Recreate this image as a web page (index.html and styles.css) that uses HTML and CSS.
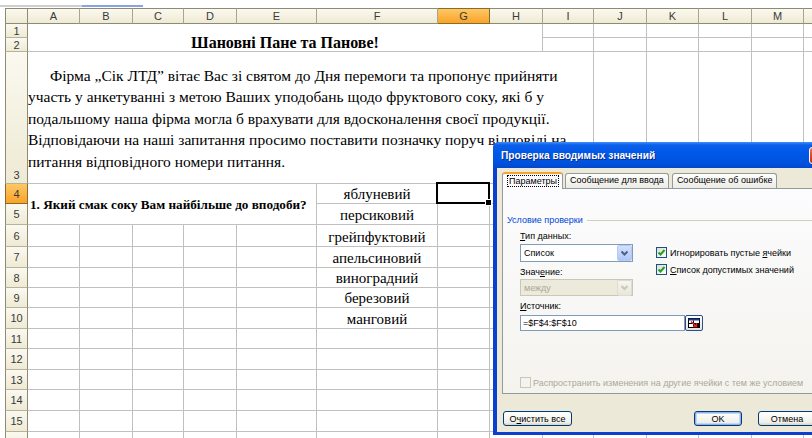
FILE: index.html
```html
<!DOCTYPE html>
<html lang="uk">
<head>
<meta charset="utf-8">
<title>Анкета — Сік ЛТД</title>
<link rel="stylesheet" href="styles.css">
</head>
<body>
<div class="app">
  <div class="toolstrip"><span class="ts-gray"></span><span class="ts-blue"></span></div>

  <div class="sheet">
    <!-- column headers -->
    <div class="hd corner"></div>
    <div class="hd col">A</div><div class="hd col">B</div><div class="hd col">C</div><div class="hd col">D</div>
    <div class="hd col">E</div><div class="hd col">F</div><div class="hd col on">G</div><div class="hd col">H</div>
    <div class="hd col">I</div><div class="hd col">J</div><div class="hd col">K</div><div class="hd col">L</div>
    <div class="hd col">M</div><div class="hd col"></div>

    <!-- rows 1-2 -->
    <div class="hd rh">1</div>
    <div class="c title">Шановні Пане та Панове!</div>
    <div class="c"></div><div class="c"></div><div class="c"></div><div class="c"></div><div class="c"></div><div class="c"></div>
    <div class="hd rh">2</div>
    <div class="c"></div><div class="c"></div><div class="c"></div><div class="c"></div><div class="c"></div><div class="c"></div>

    <!-- row 3 -->
    <div class="hd rh rh-bottom">3</div>
    <div class="c intro"><p>Фірма „Сік ЛТД” вітає Вас зі святом до Дня перемоги та пропонує прийняти<br>участь у анкетуванні з метою Ваших уподобань щодо фруктового соку, які б у<br>подальшому наша фірма могла б врахувати для вдосконалення своєї продукції.<br>Відповідаючи на наші запитання просимо поставити позначку поруч відповіді на<br>питання відповідного номери питання.</p></div>
    <div class="c"></div><div class="c"></div><div class="c"></div><div class="c"></div><div class="c"></div>

    <!-- row 4 -->
    <div class="hd rh on">4</div>
    <div class="c question">1. Який смак соку Вам найбільше до вподоби?</div>
    <div class="c opt">яблуневий</div>
    <div class="c sel"></div>
    <div class="c"></div><div class="c"></div><div class="c"></div><div class="c"></div><div class="c"></div><div class="c"></div><div class="c"></div>

    <!-- row 5 -->
    <div class="hd rh">5</div>
    <div class="c opt">персиковий</div>
    <div class="c"></div><div class="c"></div><div class="c"></div><div class="c"></div><div class="c"></div><div class="c"></div><div class="c"></div><div class="c"></div>

    <!-- rows 6-10 -->
    <div class="hd rh">6</div>
    <div class="c"></div><div class="c"></div><div class="c"></div><div class="c"></div><div class="c"></div>
    <div class="c opt">грейпфуктовий</div>
    <div class="c"></div><div class="c"></div><div class="c"></div><div class="c"></div><div class="c"></div><div class="c"></div><div class="c"></div><div class="c"></div>

    <div class="hd rh">7</div>
    <div class="c"></div><div class="c"></div><div class="c"></div><div class="c"></div><div class="c"></div>
    <div class="c opt">апельсиновий</div>
    <div class="c"></div><div class="c"></div><div class="c"></div><div class="c"></div><div class="c"></div><div class="c"></div><div class="c"></div><div class="c"></div>

    <div class="hd rh">8</div>
    <div class="c"></div><div class="c"></div><div class="c"></div><div class="c"></div><div class="c"></div>
    <div class="c opt">виноградний</div>
    <div class="c"></div><div class="c"></div><div class="c"></div><div class="c"></div><div class="c"></div><div class="c"></div><div class="c"></div><div class="c"></div>

    <div class="hd rh">9</div>
    <div class="c"></div><div class="c"></div><div class="c"></div><div class="c"></div><div class="c"></div>
    <div class="c opt">березовий</div>
    <div class="c"></div><div class="c"></div><div class="c"></div><div class="c"></div><div class="c"></div><div class="c"></div><div class="c"></div><div class="c"></div>

    <div class="hd rh">10</div>
    <div class="c"></div><div class="c"></div><div class="c"></div><div class="c"></div><div class="c"></div>
    <div class="c opt">манговий</div>
    <div class="c"></div><div class="c"></div><div class="c"></div><div class="c"></div><div class="c"></div><div class="c"></div><div class="c"></div><div class="c"></div>

    <!-- rows 11-16 -->
    <div class="hd rh">11</div>
    <div class="c"></div><div class="c"></div><div class="c"></div><div class="c"></div><div class="c"></div><div class="c"></div><div class="c"></div>
    <div class="c"></div><div class="c"></div><div class="c"></div><div class="c"></div><div class="c"></div><div class="c"></div><div class="c"></div>

    <div class="hd rh">12</div>
    <div class="c"></div><div class="c"></div><div class="c"></div><div class="c"></div><div class="c"></div><div class="c"></div><div class="c"></div>
    <div class="c"></div><div class="c"></div><div class="c"></div><div class="c"></div><div class="c"></div><div class="c"></div><div class="c"></div>

    <div class="hd rh">13</div>
    <div class="c"></div><div class="c"></div><div class="c"></div><div class="c"></div><div class="c"></div><div class="c"></div><div class="c"></div>
    <div class="c"></div><div class="c"></div><div class="c"></div><div class="c"></div><div class="c"></div><div class="c"></div><div class="c"></div>

    <div class="hd rh">14</div>
    <div class="c"></div><div class="c"></div><div class="c"></div><div class="c"></div><div class="c"></div><div class="c"></div><div class="c"></div>
    <div class="c"></div><div class="c"></div><div class="c"></div><div class="c"></div><div class="c"></div><div class="c"></div><div class="c"></div>

    <div class="hd rh">15</div>
    <div class="c"></div><div class="c"></div><div class="c"></div><div class="c"></div><div class="c"></div><div class="c"></div><div class="c"></div>
    <div class="c"></div><div class="c"></div><div class="c"></div><div class="c"></div><div class="c"></div><div class="c"></div><div class="c"></div>

    <div class="hd rh">16</div>
    <div class="c"></div><div class="c"></div><div class="c"></div><div class="c"></div><div class="c"></div><div class="c"></div><div class="c"></div>
    <div class="c"></div><div class="c"></div><div class="c"></div><div class="c"></div><div class="c"></div><div class="c"></div><div class="c"></div>
  </div>

  <!-- Data validation dialog -->
  <div class="dialog" role="dialog" aria-label="Проверка вводимых значений">
    <div class="dlg-title">
      <span class="dlg-caption">Проверка вводимых значений</span>
      <span class="dlg-close">
        <svg width="19" height="14" viewBox="0 0 19 14"><path d="M5 3 L12 11 M12 3 L5 11" stroke="#fff" stroke-width="2" fill="none"/></svg>
      </span>
    </div>
    <div class="dlg-client">
      <div class="tabs">
        <span class="tab active"><span class="focus">Параметры</span></span>
        <span class="tab">Сообщение для ввода</span>
        <span class="tab">Сообщение об ошибке</span>
      </div>
      <div class="panel">
        <div class="group-head"><span class="group-label">Условие проверки</span><span class="group-rule"></span></div>
        <div class="cond">
          <div class="cond-left">
            <span class="lbl"><u>Т</u>ип данных:</span>
            <div class="combo">
              <span class="combo-text">Список</span>
              <span class="combo-btn"><svg width="13" height="14" viewBox="0 0 13 14"><path d="M3.5 5.5 L6.5 8.5 L9.5 5.5" stroke="#4d6185" stroke-width="2" fill="none"/></svg></span>
            </div>
            <span class="lbl">Знач<u>е</u>ние:</span>
            <div class="combo disabled">
              <span class="combo-text">между</span>
              <span class="combo-btn"><svg width="13" height="13" viewBox="0 0 13 13"><path d="M3.5 5 L6.5 8 L9.5 5" stroke="#c9c7ba" stroke-width="2" fill="none"/></svg></span>
            </div>
            <span class="lbl"><u>И</u>сточник:</span>
            <div class="src-row">
              <span class="edit">=$F$4:$F$10</span>
              <span class="ref-btn">
                <svg width="14" height="12" viewBox="0 0 14 12">
                  <rect x="1.5" y="1.5" width="11" height="9" fill="#fff" stroke="#000"/>
                  <rect x="1.5" y="1.5" width="11" height="2" fill="#1a3f8c"/>
                  <path d="M1.5 6.5 H12.5 M6.5 3.5 V10.5" stroke="#000"/>
                  <rect x="7.5" y="7" width="5" height="3.5" fill="#000"/>
                  <path d="M4 4.5 L9 9" stroke="#e0201c" stroke-width="1.6"/>
                  <path d="M9.5 6 V9.5 H6" stroke="#e0201c" stroke-width="1.4" fill="none"/>
                </svg>
              </span>
            </div>
          </div>
          <div class="cond-right">
            <div class="check">
              <span class="box"><svg width="9" height="9" viewBox="0 0 9 9"><path d="M1.5 4.5 L3.5 6.5 L7.5 2" stroke="#21a121" stroke-width="2" fill="none"/></svg></span>
              <span>Игнорировать пустые <u>я</u>чейки</span>
            </div>
            <div class="check">
              <span class="box"><svg width="9" height="9" viewBox="0 0 9 9"><path d="M1.5 4.5 L3.5 6.5 L7.5 2" stroke="#21a121" stroke-width="2" fill="none"/></svg></span>
              <span><u>С</u>писок допустимых значений</span>
            </div>
          </div>
        </div>
        <div class="check spread">
          <span class="box off"></span>
          <span>Распространить изменения на другие ячейки с тем же условием</span>
        </div>
      </div>
      <div class="dlg-buttons">
        <span class="btn btn-clear">О<u>ч</u>истить все</span>
        <span class="btn btn-ok">OK</span>
        <span class="btn btn-cancel">Отмена</span>
      </div>
    </div>
  </div>
</div>
</body>
</html>
```

FILE: styles.css
```css
* { box-sizing: border-box; }

html, body {
  margin: 0;
  padding: 0;
  background: #fff;
}

body {
  font-family: "Liberation Serif", "Times New Roman", serif;
  color: #000;
}

.app {
  position: relative;
  width: 812px;
  height: 438px;
  overflow: hidden;
  background: #fff;
}

/* remnant of the toolbar area above the sheet */
.toolstrip {
  height: 8px;
  display: flex;
  align-items: flex-start;
  padding-top: 5px;
}
.ts-gray { width: 82px; height: 2px; background: #cfcfcf; }
.ts-blue { width: 61px; height: 2px; background: #86a3e3; }

/* ---------- worksheet grid ---------- */
.sheet {
  display: grid;
  margin-left: 5px;
  grid-template-columns: 23px 52px 53px 51px 53px 80px 121px 52px 53px 51px 53px 52px 53px 52px 60px;
  grid-template-rows: 16px 14px 14px 132px 20px 21px 22px 21px 20px 20px 21px 20px 21px 20px 21px 21px 21px;
}

.hd {
  background: linear-gradient(#fbf9f0, #eeead4);
  font: 11px/14px "Liberation Sans", Arial, sans-serif;
  color: #3a3a3a;
  display: flex;
  align-items: center;
  justify-content: center;
}

.col {
  border-top: 1px solid #8e8b72;
  border-bottom: 1px solid #8e8b72;
  border-right: 1px solid #aaa68c;
}

.corner {
  border-top: 1px solid #8e8b72;
  border-left: 1px solid #8e8b72;
  border-right: 1px solid #8e8b72;
  border-bottom: 1px solid #8e8b72;
}

.rh {
  border-left: 1px solid #8e8b72;
  border-right: 1px solid #8e8b72;
  border-bottom: 1px solid #b7b39a;
}
.rh-bottom { align-items: flex-end; padding-bottom: 1px; }

.hd.on {
  background: linear-gradient(#fdc866, #f9a328);
  border-color: #8a6a28;
}

.c {
  border-right: 1px solid #c0c0c0;
  border-bottom: 1px solid #c0c0c0;
  min-width: 0;
}

.title {
  grid-column: span 8;
  grid-row: span 2;
  display: flex;
  align-items: flex-end;
  justify-content: center;
  font-weight: bold;
  font-size: 16px;
  line-height: 16px;
}

.intro {
  grid-column: span 9;
  display: flex;
  align-items: center;
  font-size: 15.5px;
  line-height: 21.5px;
  white-space: nowrap;
}
.intro p {
  margin: 0;
  padding-top: 2px;
  text-indent: 22px;
}

.question {
  grid-column: span 5;
  grid-row: span 2;
  display: flex;
  align-items: center;
  padding-left: 2px;
  padding-top: 2px;
  font-weight: bold;
  font-size: 13.2px;
  white-space: nowrap;
}

.opt {
  display: flex;
  align-items: flex-end;
  justify-content: center;
  font-size: 15px;
  line-height: 17px;
  white-space: nowrap;
}

/* active cell frame with its fill handle */
.sel { position: relative; }
.sel::after {
  content: "";
  position: absolute;
  left: -2px;
  top: -2px;
  right: -1px;
  bottom: -1px;
  border: 2px solid #000;
}
.sel::before {
  content: "";
  position: absolute;
  right: -3px;
  bottom: -3px;
  width: 5px;
  height: 5px;
  background: #000;
  border: 1px solid #fff;
  z-index: 1;
}

/* ---------- dialog ---------- */
.dialog {
  position: absolute;
  left: 493px;
  top: 142px;
  width: 340px;
  height: 293px;
  display: flex;
  flex-direction: column;
  background: #0a45dc;
  border-left: 4px solid #0b3fd3;
  border-right: 4px solid #0b3fd3;
  border-bottom: 3px solid #0b3fd3;
  border-radius: 6px 6px 0 0;
  font-family: "Liberation Sans", Arial, sans-serif;
  font-size: 9px;
  color: #000;
  z-index: 5;
}

.dlg-title {
  height: 26px;
  margin: 0 -4px;
  padding: 0 3px 0 8px;
  display: flex;
  align-items: center;
  border-radius: 6px 6px 0 0;
  background: linear-gradient(#3f8ffb 0, #0b5fe9 3px, #0058e8 45%, #0052de 80%, #0148cd 100%);
}

.dlg-caption {
  color: #fff;
  font-weight: bold;
  font-size: 10.2px;
  text-shadow: 1px 1px 0 #0a2a8a;
}

.dlg-close {
  margin-left: auto;
  margin-top: 1px;
  width: 21px;
  height: 17px;
  border: 1px solid #fff;
  border-radius: 3px;
  background: linear-gradient(#e9775a, #d5401a 60%, #c6330e);
  display: flex;
  align-items: center;
  justify-content: center;
}

.dlg-client {
  flex: 1;
  background: #ece9d8;
  padding: 4px 5px 0 5px;
  display: flex;
  flex-direction: column;
}

.tabs {
  display: flex;
  align-items: flex-end;
  height: 16px;
  position: relative;
  z-index: 1;
}

.tab {
  height: 15px;
  padding: 0 4px;
  margin-right: 3px;
  border: 1px solid #919b9c;
  border-bottom: none;
  border-radius: 3px 3px 0 0;
  background: linear-gradient(#fefefe, #ecebe5);
  line-height: 13px;
  white-space: nowrap;
}

.tab.active {
  height: 17px;
  margin-bottom: -1px;
  padding: 0 4px 0 5px;
  margin-right: 2px;
  border-top: 2px solid #f5a431;
  background: #fcfcfe;
  line-height: 14px;
}

.focus {
  outline: 1px dotted #000;
  outline-offset: 0;
  padding: 0 1px;
}

.panel {
  height: 206px;
  margin-right: -10px;
  border: 1px solid #919b9c;
  background: linear-gradient(#fcfcfe, #f4f3ee);
  padding: 24px 0 2px 4px;
  display: flex;
  flex-direction: column;
}

.group-head {
  display: flex;
  align-items: center;
  height: 14px;
}
.group-label { color: #0046d5; }
.group-rule {
  flex: 1;
  height: 1px;
  margin-left: 4px;
  background: #d0d0bf;
}

.cond {
  display: flex;
  margin-left: 13px;
  margin-top: 2px;
}

.cond-left {
  width: 136px;
  display: flex;
  flex-direction: column;
}

.lbl {
  height: 14px;
  line-height: 14px;
}

.combo {
  width: 113px;
  height: 18px;
  margin: 1px 0 3px;
  border: 1px solid #7f9db9;
  background: #fff;
  display: flex;
  align-items: center;
}
.combo-text { flex: 1; padding-left: 3px; }
.combo-btn {
  width: 15px;
  height: 16px;
  border: 1px solid #b6c9f5;
  border-radius: 2px;
  background: linear-gradient(#d2e0fd, #b1c7f6);
  display: flex;
  align-items: center;
  justify-content: center;
}

.combo.disabled {
  height: 17px;
  margin: 0 0 3px;
  border-color: #c9c7ba;
  background: #ebeadb;
  color: #aca899;
}
.combo.disabled .combo-btn {
  border-color: #dedccf;
  background: linear-gradient(#f6f5ef, #e9e7da);
}

.src-row {
  display: flex;
  margin-top: 2px;
  width: 184px;
}

.edit {
  width: 165px;
  height: 16px;
  border: 1px solid #7f9db9;
  background: #fff;
  padding-left: 2px;
  line-height: 14px;
}

.ref-btn {
  width: 18px;
  height: 16px;
  border: 1px solid #2c4d8a;
  border-radius: 2px;
  background: linear-gradient(#ffffff, #e4e3dc);
  display: flex;
  align-items: center;
  justify-content: center;
}

.cond-right {
  padding-top: 15px;
  display: flex;
  flex-direction: column;
}

.check {
  display: flex;
  align-items: center;
  height: 17px;
  white-space: nowrap;
}

.box {
  width: 11px;
  height: 11px;
  margin-right: 3px;
  border: 1px solid #1c5180;
  background: linear-gradient(135deg, #dcdcd6, #fff);
  display: flex;
  align-items: center;
  justify-content: center;
}

.spread {
  margin-top: auto;
  margin-left: 13px;
  color: #aca899;
}
.box.off {
  border-color: #c9c7ba;
  background: #f4f3ee;
  margin-right: 2px;
}

.dlg-buttons {
  display: flex;
  margin-top: 17px;
  padding: 0 8px 0 1px;
}

.btn {
  height: 15px;
  border: 1px solid #003c74;
  border-radius: 3px;
  background: linear-gradient(#ffffff, #f0f0ea 80%, #d6d0c5);
  display: flex;
  align-items: center;
  justify-content: center;
  white-space: nowrap;
}
.btn-clear { width: 69px; }
.btn-ok {
  width: 48px;
  margin-left: auto;
  box-shadow: inset 0 0 0 1px #8fb2ec, inset 0 0 0 2px #c5d6f6;
}
.btn-cancel { width: 58px; margin-left: 16px; }
```
